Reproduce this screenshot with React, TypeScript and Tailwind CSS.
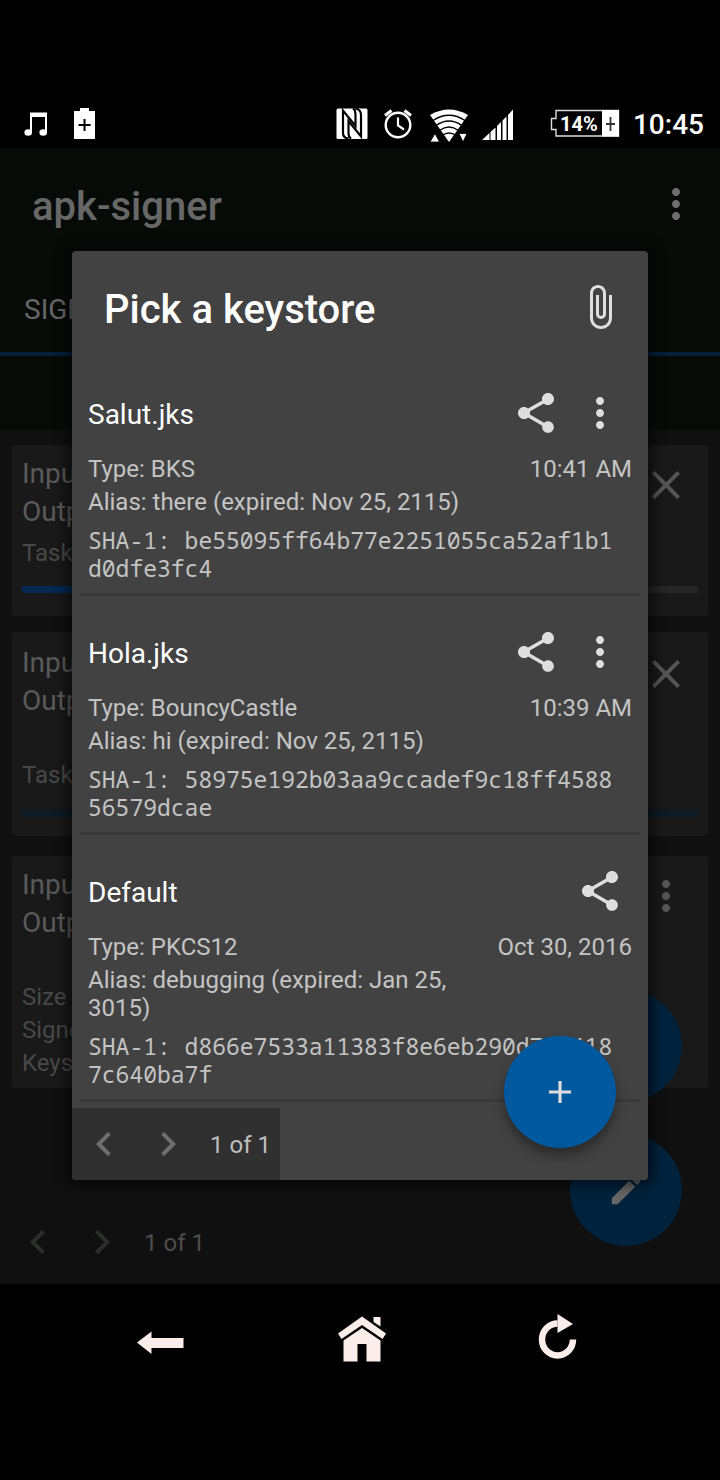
import React from "react";
import {
  MdAdd,
  MdAttachFile,
  MdChevronLeft,
  MdChevronRight,
  MdClose,
  MdEdit,
  MdMoreVert,
  MdShare,
} from "react-icons/md";

type Keystore = {
  name: string;
  type: string;
  alias: string;
  date: string;
  sha: string;
  menu: boolean;
};

const keystores: Keystore[] = [
  {
    name: "Salut.jks",
    type: "BKS",
    alias: "there (expired: Nov 25, 2115)",
    date: "10:41 AM",
    sha: "be55095ff64b77e2251055ca52af1b1d0dfe3fc4",
    menu: true,
  },
  {
    name: "Hola.jks",
    type: "BouncyCastle",
    alias: "hi (expired: Nov 25, 2115)",
    date: "10:39 AM",
    sha: "58975e192b03aa9ccadef9c18ff458856579dcae",
    menu: true,
  },
  {
    name: "Default",
    type: "PKCS12",
    alias: "debugging (expired: Jan 25, 3015)",
    date: "Oct 30, 2016",
    sha: "d866e7533a11383f8e6eb290d7ed4187c640ba7f",
    menu: false,
  },
];

function StatusBar() {
  return (
    <header className="flex h-[148px] items-end bg-black pr-4 pl-6 text-white">
      <svg viewBox="0 0 24 48" className="mr-[26px] h-12 w-6" fill="#fff">
        <path d="M6 12.5h17V33h-2V17H8v16H6z" />
        <ellipse cx="4.200" cy="32.500" rx="3.800" ry="3.200" />
        <ellipse cx="19.200" cy="32.500" rx="3.800" ry="3.200" />
      </svg>
      <svg viewBox="0 0 22 48" className="h-12 w-[22px]" fill="#fff">
        <path d="M6 8h9v3h6v28H0V11h6z" />
        <path d="M10.500 19v12M4.500 25h12" stroke="#000" strokeWidth="2" />
      </svg>

      <svg viewBox="0 0 32 48" className="ml-auto h-12 w-8" fill="none">
        <rect x="0.500" y="8.500" width="31" height="30.500" rx="1.500" fill="#fff" />
        <path
          d="M12.500 38.500Q7 38 7 33V10.500L19.500 26V15Q19.500 10 17 8.500M19.500 8.500Q25 9.500 25 15V36.500L12.500 21V33Q12.500 37 15 38.500"
          stroke="#000"
          strokeWidth="2.200"
        />
      </svg>
      <svg viewBox="0 0 30 48" className="ml-4 h-12 w-[30px]" fill="none" stroke="#fff">
        <circle cx="14" cy="25" r="12.300" strokeWidth="2.400" />
        <path d="M14 17.500V25.500L20 29.500" strokeWidth="2.200" />
        <path d="M1 15.500L7.500 10.500M27 15.500L20.500 10.500" strokeWidth="3" />
      </svg>
      <svg viewBox="0 0 40 48" className="ml-4 h-12 w-10" fill="none">
        <path d="M0 15Q19 4 38 15L19 42z" fill="#fff" />
        <g stroke="#000" strokeWidth="1.300">
          <path d="M3 20.500Q19 10 35 20.500" />
          <path d="M6 25.500Q19 16.500 32 25.500" />
          <path d="M9.500 30.500Q19 23.500 28.500 30.500" />
          <path d="M12 35.500Q19 30.500 26 35.500" />
        </g>
        <path d="M0 42L5 33.500L9.500 42zM29 33.500H37L33 42z" fill="#fff" stroke="#000" strokeWidth="0.800" />
      </svg>
      <svg viewBox="0 0 32 48" className="ml-3 h-12 w-8" fill="#fff">
        <path d="M0 40L7.500 33V40zM8.500 32L13.500 27.500V40H8.500zM15 26L19 22V40H15zM20.500 20.500L24.500 16.500V40H20.500zM26 15L31 9.500V40H26z" />
      </svg>
      <div className="relative ml-9 h-12 w-[70px]">
        <svg viewBox="0 0 70 48" className="h-12 w-[70px]" fill="none">
          <path d="M6 10.500H68.500V36H6V29.500H1.500V18.500H6z" stroke="#ddd" strokeWidth="1.400" />
          <rect x="52" y="10" width="17" height="26.500" fill="#fff" />
          <path d="M60.500 17v14M56 24h9" stroke="#333" strokeWidth="1.800" />
        </svg>
        <span className="absolute top-3 left-[10px] text-[20px] leading-6 font-bold">14%</span>
      </div>
      <span className="ml-[13px] text-[28px] leading-[46px] font-medium">10:45</span>
    </header>
  );
}

function Pager({ dim = false }: { dim?: boolean }) {
  return (
    <div
      className={
        dim
          ? "flex h-[72px] w-fit items-center pl-[6px] text-[#2c2e2c]"
          : "flex h-[72px] w-[208px] items-center rounded-bl bg-[#303030] text-[#707070]"
      }
    >
      <button aria-label="Previous page" className="flex w-16 justify-center">
        <MdChevronLeft size={48} />
      </button>
      <button aria-label="Next page" className="flex w-16 justify-center">
        <MdChevronRight size={48} />
      </button>
      <span
        className={
          dim ? "pt-[2px] pl-[10px] text-2xl text-[#4c4c4c]" : "pt-[2px] pl-[10px] text-2xl text-[#bdbdbd]"
        }
      >
        1 of 1
      </span>
    </div>
  );
}

function KeystoreItem({ item }: { item: Keystore }) {
  return (
    <li className="px-2">
      <div className="border-b-[3px] border-[#393939] px-2 pt-6 pb-[11px]">
        <div className="flex h-16 items-center text-[#dedede]">
          <h2 className="flex-1 pt-1 text-[28px] leading-8 text-white">{item.name}</h2>
          <button aria-label={`Share ${item.name}`} className="flex w-16 justify-center">
            <MdShare size={48} />
          </button>
          {item.menu && (
            <button aria-label={`More options for ${item.name}`} className="flex w-16 justify-center">
              <MdMoreVert size={48} />
            </button>
          )}
        </div>
        <div className="mt-[10px] flex text-2xl leading-7 text-[#c4c4c4]">
          <div className="flex-1">
            <p>{`Type: ${item.type}`}</p>
            <p className="mt-[5px]">{`Alias: ${item.alias}`}</p>
          </div>
          <time className="whitespace-nowrap">{item.date}</time>
        </div>
        <p className="mt-[10px] pr-3 font-['Noto_Sans_Mono','DejaVu_Sans_Mono',monospace] text-[23px] leading-7 break-all text-[#c4c4c4]">
          {`SHA-1: ${item.sha}`}
        </p>
      </div>
    </li>
  );
}

function Dialog() {
  return (
    <div
      role="dialog"
      aria-label="Pick a keystore"
      className="relative rounded bg-[#424242] shadow-[0_0_12px_6px_rgba(0,0,0,0.5)]"
    >
      <div className="flex h-[106px] items-start pt-8 pr-4 pl-8">
        <h1 className="flex-1 pt-[3px] text-[40px] leading-[48px] font-medium text-white">Pick a keystore</h1>
        <button aria-label="Attach file" className="flex w-16 justify-center text-[#dedede]">
          <MdAttachFile size={48} />
        </button>
      </div>
      <ul>
        {keystores.map((item) => (
          <KeystoreItem key={item.name} item={item} />
        ))}
      </ul>
      <div className="pt-[6px]">
        <Pager />
      </div>
      <button
        aria-label="Add keystore"
        className="absolute right-8 bottom-8 flex h-28 w-28 items-center justify-center rounded-full bg-[#00599f] text-[#dedede] shadow-[0_8px_12px_rgba(0,0,0,0.35)]"
      >
        <MdAdd size={38} />
      </button>
    </div>
  );
}

function TaskCards() {
  return (
    <div className="flex flex-col px-3 pt-[15px] text-[28px] leading-[38px] text-[#5a5a5a]">
      <section className="h-[171px] rounded bg-[#191919] px-[10px] pt-[10px]">
        <div className="flex justify-between">
          <div>
            <p>Input</p>
            <p>Output</p>
          </div>
          <button aria-label="Cancel task" className="mr-2 flex h-[60px] w-12 items-center text-[#555]">
            <MdClose size={48} />
          </button>
        </div>
        <p className="mt-[6px] text-2xl leading-8 text-[#484848]">Task</p>
        <div className="mt-[17px] h-[7px] bg-[#262626]">
          <div className="h-[7px] w-1/3 bg-[#032954]" />
        </div>
      </section>
      <section className="mt-4 h-[204px] rounded bg-[#191919] px-[10px] pt-3">
        <div className="flex justify-between">
          <div>
            <p>Input</p>
            <p>Output</p>
          </div>
          <button aria-label="Cancel task" className="mr-2 flex h-[60px] w-12 items-center text-[#555]">
            <MdClose size={48} />
          </button>
        </div>
        <p className="mt-[39px] text-2xl leading-8 text-[#484848]">Task</p>
        <div className="mt-[18px] h-2 bg-[#0e1a24]" />
      </section>
      <section className="mt-5 h-[232px] rounded bg-[#191919] px-[10px] pt-[10px]">
        <div className="flex justify-between">
          <div>
            <p>Input</p>
            <p>Output</p>
          </div>
          <button aria-label="More options" className="mr-2 flex h-[60px] w-12 items-center text-[#555]">
            <MdMoreVert size={48} />
          </button>
        </div>
        <div className="mt-[39px] text-2xl leading-[33px] text-[#484848]">
          <p>Size</p>
          <p>Signed</p>
          <p>Keystore</p>
        </div>
      </section>
    </div>
  );
}

function NavBar() {
  return (
    <nav className="grid h-[196px] grid-cols-3 items-start bg-black px-[62px] pt-[30px]">
      <button aria-label="Back" className="flex justify-center">
        <svg viewBox="0 0 48 48" className="h-12 w-12" fill="#fbeeea">
          <path d="M0 28.500L14.500 17.500V24H46.500V34H14.500V40z" />
        </svg>
      </button>
      <button aria-label="Home" className="flex justify-center">
        <svg viewBox="0 0 52 48" className="h-12 w-[52px]" fill="#fbeeea">
          <path d="M28 2.500L52 19.500L48.500 25L28 11L7.500 25L4 19.500z" />
          <path d="M39.500 3H46.500V12.500L39.500 8z" />
          <path d="M28 14L46.500 26.500V47.500H32.500V30H23.500V47.500H9.500V26.500z" />
        </svg>
      </button>
      <button aria-label="Refresh" className="flex justify-center">
        <svg viewBox="0 0 48 48" className="h-12 w-12" fill="none">
          <path d="M22.500 9.500A15.500 16 0 1 0 38 25.500" stroke="#fbeeea" strokeWidth="6.500" />
          <path d="M22.500 0L38 10L22.500 19z" fill="#fbeeea" />
        </svg>
      </button>
    </nav>
  );
}

export default function App() {
  return (
    <div className="flex min-h-screen flex-col bg-black font-['Roboto',sans-serif]">
      <StatusBar />
      <main className="relative flex flex-col bg-[#101010]">
        <div className="bg-[#070b08]">
          <div className="flex h-[116px] items-start justify-between pt-8 pr-5 pl-8 text-[#676767]">
            <span className="pt-[3px] text-[40px] leading-[48px] font-medium">apk-signer</span>
            <button aria-label="App menu" className="flex text-[#6f6f6f]">
              <MdMoreVert size={48} />
            </button>
          </div>
          <div className="h-[92px] border-b-4 border-[#04203c] pl-6 text-[28px] leading-[92px] text-[#676767]">
            SIGN
          </div>
          <div className="h-[74px]" />
        </div>
        <TaskCards />
        <div className="pt-[118px] pb-[6px]">
          <Pager dim />
        </div>
        <button
          aria-label="Upload"
          className="absolute right-[38px] bottom-[182px] h-28 w-28 rounded-full bg-[#00223d]"
        />
        <button
          aria-label="Edit"
          className="absolute right-[38px] bottom-[38px] flex h-28 w-28 items-center justify-center rounded-full bg-[#00223d] text-[#666]"
        >
          <MdEdit size={38} />
        </button>
        <div className="absolute inset-x-[72px] top-[103px]">
          <Dialog />
        </div>
      </main>
      <NavBar />
    </div>
  );
}
